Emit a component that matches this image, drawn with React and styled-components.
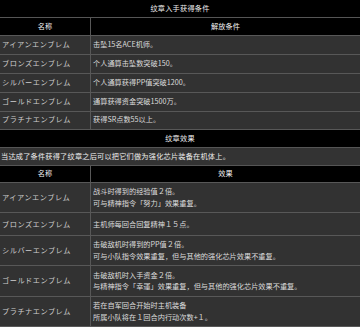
import React from "react";
import styled, { createGlobalStyle } from "styled-components";

const GlobalStyle = createGlobalStyle`
  html, body {
    margin: 0;
    padding: 0;
    background: #000;
  }
  body {
    font-family: "Noto Sans CJK SC", "Noto Sans CJK JP", sans-serif;
    font-size: 7.2px;
    color: #e2e2e2;
  }
`;

const Page = styled.div`
  width: 360px;
  height: 327px;
  overflow: hidden;
  display: flex;
  flex-direction: column;
`;

const Caption = styled.div`
  height: ${(p) => p.h || 17}px;
  box-sizing: border-box;
  display: flex;
  align-items: center;
  justify-content: ${(p) => (p.left ? "flex-start" : "center")};
  padding-left: ${(p) => (p.left ? "1px" : "0")};
  background: ${(p) => (p.gray ? "#333" : "#000")};
  border-bottom: 1px solid #555;
  color: #eee;
  letter-spacing: 0.2px;
  white-space: nowrap;
`;

const Row = styled.div`
  display: grid;
  grid-template-columns: 90px 1fr;
  height: ${(p) => p.h}px;
  box-sizing: border-box;
  background: ${(p) => (p.head ? "#000" : "#323232")};
  border-bottom: 1px solid #585858;
`;

const Cell = styled.div`
  display: flex;
  flex-direction: column;
  justify-content: center;
  align-items: ${(p) => (p.center ? "center" : "flex-start")};
  padding-left: ${(p) => (p.center ? "0" : "2px")};
  line-height: 11.5px;
  white-space: nowrap;
  color: ${(p) => (p.center ? "#f2f2f2" : "#dcdcdc")};
  & + & {
    border-left: 1px solid #585858;
  }
`;

const Kana = styled.span`
  letter-spacing: 0.5px;
  color: #cfcfcf;
`;

const unlock = [
  ["アイアンエンブレム", "击坠15名ACE机师。"],
  ["ブロンズエンブレム", "个人通算击坠数突破150。"],
  ["シルバーエンブレム", "个人通算获得PP值突破1200。"],
  ["ゴールドエンブレム", "通算获得资金突破1500万。"],
  ["プラチナエンブレム", "获得SR点数55以上。"],
];

const effects = [
  ["アイアンエンブレム", ["战斗时得到的经验值２倍。", "可与精神指令「努力」效果重复。"], 30],
  ["ブロンズエンブレム", ["主机师每回合回复精神１５点。"], 23],
  ["シルバーエンブレム", ["击破敌机时得到的PP值２倍。", "可与小队指令效果重复，但与其他的强化芯片效果不重复。"], 30],
  ["ゴールドエンブレム", ["击破敌机时入手资金２倍。", "与精神指令「幸運」效果重复，但与其他的强化芯片效果不重复。"], 31],
  ["プラチナエンブレム", ["若在自军回合开始时主机装备", "所属小队将在１回合内行动次数+１。"], 30],
];

const App = () => (
  <Page>
    <GlobalStyle />
    <Caption h={18}>纹章入手获得条件</Caption>
    <Row head h={18}>
      <Cell center>名称</Cell>
      <Cell center>解放条件</Cell>
    </Row>
    {unlock.map(([name, cond], i) => (
      <Row key={name} h={i === 4 ? 18 : 19}>
        <Cell>
          <Kana>{name}</Kana>
        </Cell>
        <Cell>{cond}</Cell>
      </Row>
    ))}
    <Caption h={18}>纹章效果</Caption>
    <Caption h={18} gray left>
      当达成了条件获得了纹章之后可以把它们做为强化芯片装备在机体上。
    </Caption>
    <Row head h={18}>
      <Cell center>名称</Cell>
      <Cell center>效果</Cell>
    </Row>
    {effects.map(([name, lines, h]) => (
      <Row key={name} h={h}>
        <Cell>
          <Kana>{name}</Kana>
        </Cell>
        <Cell>
          {lines.map((l) => (
            <span key={l}>{l}</span>
          ))}
        </Cell>
      </Row>
    ))}
  </Page>
);

export default App;
